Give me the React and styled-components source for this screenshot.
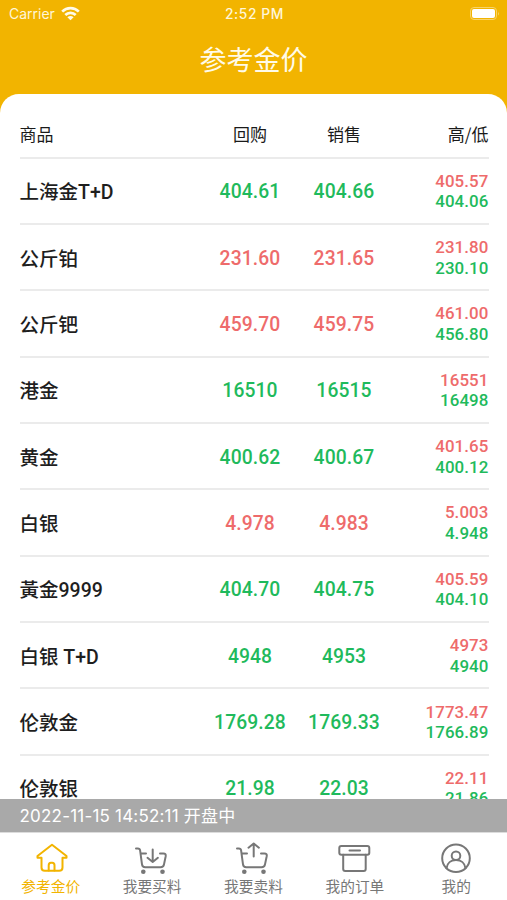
import React from "react";
import styled, { createGlobalStyle } from "styled-components";

const GlobalStyle = createGlobalStyle`
    * {
        box-sizing: border-box;
    }
    body {
        margin: 0;
        background-color: #fff;
        font-family: Roboto, "Noto Sans CJK SC", sans-serif;
    }
`

const Screen = styled.div`
    display: flex;
    flex-direction: column;
    width: 507px;
    height: 900px;
    overflow: hidden;
    background-color: #f2b400;
`

const StatusBar = styled.div`
    display: grid;
    grid-template-columns: 1fr auto 1fr;
    align-items: center;
    flex: none;
    height: 27px;
    padding: 0 7px 0 9px;
    font-family: Inter, sans-serif;
    font-size: 14px;
    color: #fff6d8;
`

const Carrier = styled.div`
    display: flex;
    align-items: center;
    gap: 6px;
`

const Clock = styled.div`
    font-size: 13.8px;
    font-weight: 500;
    letter-spacing: 0.6px;
`

const Battery = styled.svg`
    justify-self: end;
`

const Title = styled.h1`
    flex: none;
    height: 67px;
    margin: 0;
    font-size: 27px;
    font-weight: 400;
    line-height: 69px;
    text-align: center;
    color: #fffbe9;
`

const Sheet = styled.main`
    flex: 1;
    min-height: 0;
    overflow: hidden;
    padding: 17px 18.5px 0 19.5px;
    border-radius: 19px 19px 0 0;
    background-color: #fff;
`

const Row = styled.div`
    display: grid;
    grid-template-columns: 183.5px 94px 94px 1fr;
    align-items: center;
    height: 66.37px;
    border-bottom: 2px solid #ebebeb;
`

const HeaderRow = styled(Row)`
    height: 47.5px;
    font-family: "Noto Sans CJK SC", sans-serif;
    font-size: 17px;
    color: #1a1a1a;
`

const HeaderCell = styled.span`
    text-align: ${props => props.$align || "left"};
`

const Name = styled.span`
    font-size: 19.5px;
    font-weight: 500;
    color: #1e1e1e;
`

const Price = styled.span`
    justify-self: center;
    padding-top: 2px;
    font-size: 19.3px;
    font-weight: 500;
    letter-spacing: 0.1px;
    color: ${props => (props.$up ? "#ee6b6b" : "#1fba5c")};
`

const Range = styled.div`
    display: flex;
    flex-direction: column;
    align-items: flex-end;
    padding-top: 1px;
`

const RangePrice = styled(Price)`
    padding-top: 0;
    font-size: 16.9px;
    line-height: 20.5px;
`

const MarketStatus = styled.div`
    flex: none;
    height: 33px;
    padding-left: 19.5px;
    font-family: Inter, "Noto Sans CJK SC", sans-serif;
    font-size: 17px;
    line-height: 34px;
    letter-spacing: 0.2px;
    color: #fff;
    background-color: #a9a9a9;
`

const TabBar = styled.nav`
    display: grid;
    grid-template-columns: repeat(5, 1fr);
    flex: none;
    height: 68px;
    border-top: 1px solid #dcdcdc;
    background-color: #fff;
`

const Tab = styled.a`
    display: flex;
    flex-direction: column;
    align-items: center;
    padding-top: 8px;
    font-size: 14.7px;
    line-height: 24px;
    color: ${props => (props.$active ? "#f2b400" : "#777")};
`

const TabIcon = styled.svg`
    width: 36px;
    height: 34px;
    fill: none;
    stroke: currentColor;
    stroke-width: 2;
    stroke-linecap: round;
    stroke-linejoin: round;
`

const products = [
    { name: "上海金T+D", buy: "404.61", sell: "404.66", high: "405.57", low: "404.06" },
    { name: "公斤铂", buy: "231.60", sell: "231.65", high: "231.80", low: "230.10", up: true },
    { name: "公斤钯", buy: "459.70", sell: "459.75", high: "461.00", low: "456.80", up: true },
    { name: "港金", buy: "16510", sell: "16515", high: "16551", low: "16498" },
    { name: "黄金", buy: "400.62", sell: "400.67", high: "401.65", low: "400.12" },
    { name: "白银", buy: "4.978", sell: "4.983", high: "5.003", low: "4.948", up: true },
    { name: "黃金9999", buy: "404.70", sell: "404.75", high: "405.59", low: "404.10" },
    { name: "白银 T+D", buy: "4948", sell: "4953", high: "4973", low: "4940" },
    { name: "伦敦金", buy: "1769.28", sell: "1769.33", high: "1773.47", low: "1766.89" },
    { name: "伦敦银", buy: "21.98", sell: "22.03", high: "22.11", low: "21.86" },
];

const HomeIcon = () => (
    <TabIcon viewBox="0 0 36 34">
        <path d="M19 3.700L4.500 15v1.800h4v9.700q0 3.300 3.300 3.300h14.400q3.300 0 3.300-3.300v-9.700h4V15z" />
        <path d="M15.700 29.500v-5.200q0-2.500 2.200-2.500h1.400q2.200 0 2.200 2.500v5.200" />
    </TabIcon>
)

const Cart = () => (
    <>
        <path d="M2 7.500h1.800q2 0 2.300 1.900l1.900 14q.4 2.900 3.200 2.900h15.300q3 0 3.500-2.900l1.700-8.100q.5-2.800-2.300-2.800H26M7 12.500h5" />
        <circle cx="9.300" cy="30.800" r="2.300" fill="currentColor" stroke="none" />
        <circle cx="28.500" cy="30.800" r="2.300" fill="currentColor" stroke="none" />
    </>
)

const BuyIcon = () => (
    <TabIcon viewBox="0 0 36 34">
        <Cart />
        <path d="M18.700 8.500v12.500M13.500 16.800l5.200 4.200 5.200-4.200" />
    </TabIcon>
)

const SellIcon = () => (
    <TabIcon viewBox="0 0 36 34">
        <Cart />
        <path d="M18.700 15.500V2.500M13.500 6.700l5.200-4.200 5.200 4.200" />
    </TabIcon>
)

const OrderIcon = () => (
    <TabIcon viewBox="0 0 36 34">
        <rect x="2.300" y="5" width="30" height="8.800" rx="2" />
        <path d="M6.200 13.800V28a2 2 0 0 0 2 2h18.500a2 2 0 0 0 2-2V13.800M12.500 9.500h10.500" />
    </TabIcon>
)

const MineIcon = () => (
    <TabIcon viewBox="0 0 36 34">
        <circle cx="18" cy="17.300" r="13.800" />
        <circle cx="18" cy="14.700" r="4.300" />
        <path d="M8.500 27.300c.6-5.100 4.500-8.200 9.500-8.200s8.900 3.100 9.500 8.200" />
    </TabIcon>
)

const tabs = [
    { label: "参考金价", Icon: HomeIcon, active: true },
    { label: "我要买料", Icon: BuyIcon },
    { label: "我要卖料", Icon: SellIcon },
    { label: "我的订单", Icon: OrderIcon },
    { label: "我的", Icon: MineIcon },
];

const App = () => {
    return (
        <Screen>
            <GlobalStyle />
            <StatusBar>
                <Carrier>
                    Carrier
                    <svg width="19" height="15" viewBox="0 0 19 15" fill="none" stroke="#fffbe9" strokeWidth="2.7">
                        <path d="M1.200 5.600a11.800 11.800 0 0 1 16.600 0" />
                        <path d="M4.300 9a7.400 7.400 0 0 1 10.400 0" />
                        <path d="M9.500 14.300L6.400 11.200q3.100-2.500 6.200 0z" fill="#fffbe9" stroke="none" />
                    </svg>
                </Carrier>
                <Clock>2:52 PM</Clock>
                <Battery width="30" height="13" viewBox="0 0 30 13">
                    <rect x=".5" y=".5" width="26" height="12" rx="3.500" fill="none" stroke="#f7d36a" />
                    <rect x="2" y="2" width="23" height="9" rx="2" fill="#fff" />
                    <path d="M28 4.500q1.700 2 0 4z" fill="#f7d36a" />
                </Battery>
            </StatusBar>
            <Title>参考金价</Title>
            <Sheet>
                <HeaderRow>
                    <HeaderCell>商品</HeaderCell>
                    <HeaderCell $align="center">回购</HeaderCell>
                    <HeaderCell $align="center">销售</HeaderCell>
                    <HeaderCell $align="right">高/低</HeaderCell>
                </HeaderRow>
                {products.map(item => (
                    <Row key={item.name}>
                        <Name>{item.name}</Name>
                        <Price $up={item.up}>{item.buy}</Price>
                        <Price $up={item.up}>{item.sell}</Price>
                        <Range>
                            <RangePrice $up>{item.high}</RangePrice>
                            <RangePrice>{item.low}</RangePrice>
                        </Range>
                    </Row>
                ))}
            </Sheet>
            <MarketStatus>2022-11-15 14:52:11 开盘中</MarketStatus>
            <TabBar>
                {tabs.map(({ label, Icon, active }) => (
                    <Tab key={label} $active={active}>
                        <Icon />
                        {label}
                    </Tab>
                ))}
            </TabBar>
        </Screen>
    );
};

export default App;
